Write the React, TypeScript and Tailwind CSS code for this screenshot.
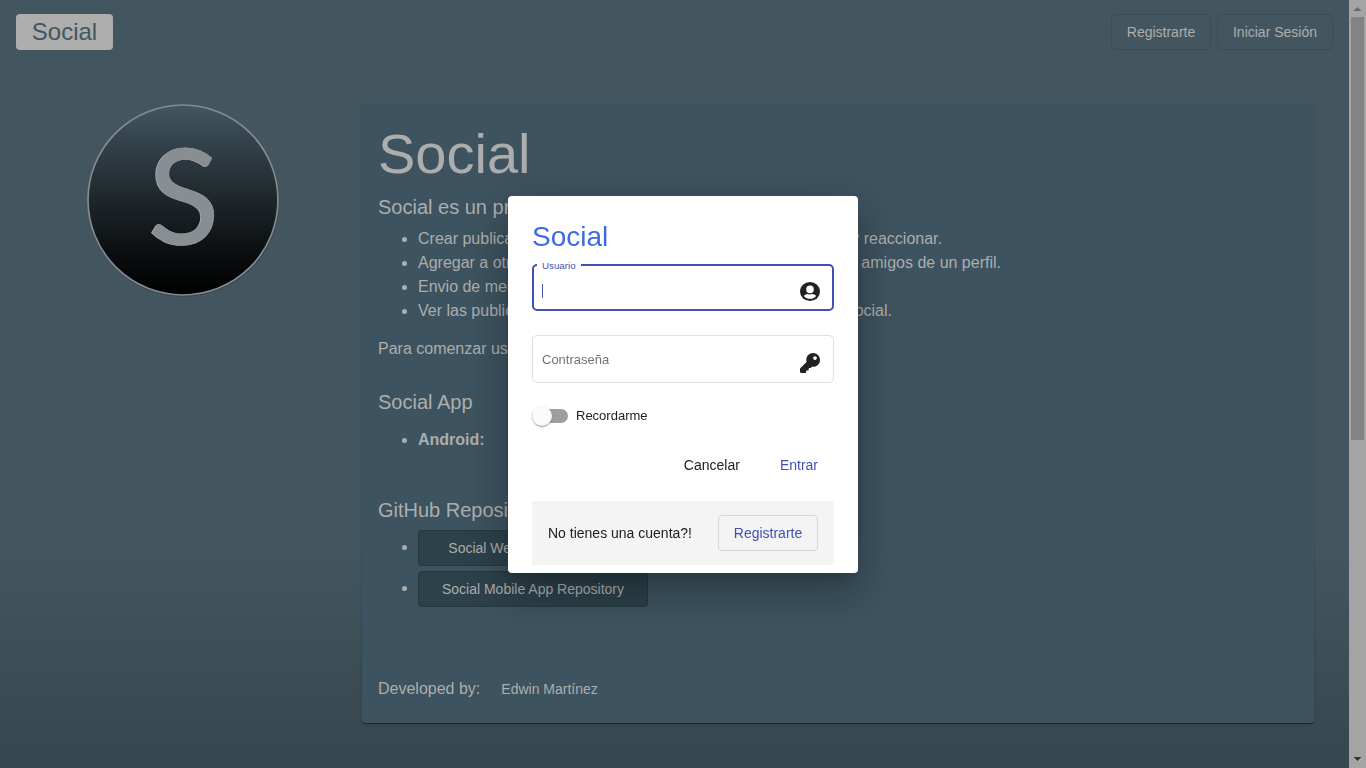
import React from "react";
import { FaKey } from "react-icons/fa";

const features: [string, string, string][] = [
  ["Crear publicaciones", "y reaccionar.", "w-[524px]"],
  ["Agregar a otros usuarios", "amigos de un perfil.", "w-[583px]"],
  ["Envio de mensajes", "", "w-[440px]"],
  ["Ver las publicaciones", "Social.", "w-[474px]"],
];

function Logo() {
  return (
    <svg className="block size-[194px]" viewBox="0 0 194 194">
      <defs>
        <linearGradient id="disc" x1="0" y1="0" x2="0" y2="1">
          <stop offset="0" stopColor="#43565f" />
          <stop offset="0.2" stopColor="#33424a" />
          <stop offset="0.5" stopColor="#1e262a" />
          <stop offset="0.78" stopColor="#0b0e10" />
          <stop offset="1" stopColor="#000" />
        </linearGradient>
      </defs>
      <circle cx="97.4" cy="97.8" r="95" fill="none" stroke="#27343a" strokeOpacity=".5" strokeWidth="2" />
      <circle cx="97" cy="97" r="95" fill="url(#disc)" stroke="#858b8e" strokeWidth="1.7" />
      <g fontFamily="Lato, sans-serif" fontSize="131" textAnchor="middle" strokeLinejoin="miter">
        <text x="97.2" y="140.6" fill="#a2a6a8" stroke="#a2a6a8" strokeWidth="1.6">S</text>
        <text x="98.1" y="141.3" fill="#888e91" stroke="#888e91" strokeWidth="1">S</text>
      </g>
    </svg>
  );
}

function UserIcon() {
  return (
    <svg className="mt-2 h-[19px] w-5" viewBox="2 2.5 20 19" fill="currentColor">
      <ellipse cx="12" cy="12" rx="10" ry="9.5" />
      <g fill="#fff">
        <circle cx="12" cy="9.9" r="3.8" />
        <path d="M5.8 16.4C7.2 15.2 8.6 14.5 9.6 14.5c.8.3 1.6.4 2.4.4s1.6-.1 2.4-.4c1 0 2.4.7 3.8 1.9-1.6 1.9-3.8 2.9-6.2 2.9s-4.6-1-6.2-2.9z" />
      </g>
    </svg>
  );
}

function Page() {
  return (
    <div className="flex min-w-0 flex-1 flex-col bg-[linear-gradient(#43565f_0,#43565f_540px,#36464e_768px)] text-[#adadad]">
      <header className="flex h-16 shrink-0 items-center justify-between pl-4 pr-4">
        <div className="flex h-9 w-[97px] items-center justify-center rounded bg-[#adadad] text-2xl text-[#43565f]">Social</div>
        <nav className="flex gap-1.5 text-sm font-medium">
          <button className="h-9 w-[100px] rounded border border-[#3b4c54]">Registrarte</button>
          <button className="h-9 w-[116px] rounded border border-[#3b4c54]">Iniciar Sesión</button>
        </nav>
      </header>
      <main className="flex pt-[39px]">
        <div className="w-[362px] shrink-0 pl-[86px]">
          <Logo />
        </div>
        <section className="mt-px h-[619px] w-[952px] rounded bg-[#3d535f] px-4 pt-[18px] shadow-[0_2px_1px_-1px_rgba(0,0,0,.2),0_1px_1px_0_rgba(0,0,0,.3),0_1px_3px_0_rgba(0,0,0,.12)]">
          <h1 className="h-16 text-[56px] leading-[64px]">Social</h1>
          <h2 className="mt-[5px] text-xl leading-8">Social es un proyecto</h2>
          <ul className="mt-1 list-disc pl-10 text-base leading-6">
            {features.map(([start, end, width]) => (
              <li key={start}>
                <div className={`flex justify-between whitespace-nowrap ${width}`}>
                  <span>{start}</span>
                  <span>{end}</span>
                </div>
              </li>
            ))}
          </ul>
          <p className="mt-3.5 text-base leading-6">Para comenzar usa</p>
          <h2 className="mt-[25px] text-xl leading-8">Social App</h2>
          <ul className="mt-2.5 list-disc pl-10 text-base font-bold leading-6">
            <li>Android:</li>
          </ul>
          <h2 className="mt-[42px] text-xl leading-8">GitHub Repository</h2>
          <ul className="mt-1 flex list-disc flex-col gap-[5px] pl-10 text-base">
            <li>
              <button className="h-9 w-[230px] rounded border border-[#26383f] bg-[#2c4149] align-middle text-sm font-medium">Social Web App Repository</button>
            </li>
            <li>
              <button className="h-9 w-[230px] rounded border border-[#26383f] bg-[#2c4149] align-middle text-sm font-medium">Social Mobile App Repository</button>
            </li>
          </ul>
          <footer className="mt-[70px] flex items-center gap-[21px] text-base leading-6">
            <span>Developed by:</span>
            <a className="text-sm font-medium">Edwin Martínez</a>
          </footer>
        </section>
      </main>
    </div>
  );
}

function Scrollbar() {
  return (
    <div className="flex w-[17px] shrink-0 flex-col items-center bg-[#a4a4a4]">
      <svg className="h-[17px] w-[17px]" viewBox="0 0 17 17" shapeRendering="crispEdges">
        <path d="M5 11h7v-1h-1V9h-1V8H9V7H8v1H7v1H6v1H5z" fill="#6b6b6b" />
      </svg>
      <div className="h-[423px] w-[13px] bg-[#838383]" />
      <svg className="mt-auto h-[17px] w-[17px]" viewBox="0 0 17 17" shapeRendering="crispEdges">
        <path d="M5 6h7v1h-1v1h-1v1H9v1H8V9H7V8H6V7H5z" fill="#373737" />
      </svg>
    </div>
  );
}

function LoginDialog() {
  return (
    <div className="h-[377px] w-[350px] rounded bg-white px-6 pt-[25px] text-[#212121] shadow-[0_11px_15px_-7px_rgba(0,0,0,.2),0_24px_38px_3px_rgba(0,0,0,.14),0_9px_46px_8px_rgba(0,0,0,.12)]">
      <h2 className="h-8 text-[28px] leading-8 text-[#4169e1]">Social</h2>
      <div className="relative mt-[11px] flex h-[47px] items-center justify-between rounded-[5px] border-2 border-[#3f51b5] pl-2 pr-3">
        <span className="absolute -top-1.5 left-[3px] bg-white px-[5px] text-[9.75px] leading-[11px] text-[#3f51b5]">Usuario</span>
        <span className="mt-[7px] h-3.5 w-px bg-[#3f51b5]" />
        <UserIcon />
      </div>
      <div className="mt-6 flex h-12 items-center justify-between rounded-[5px] border border-[#e0e0e0] pl-[9px] pr-[13px]">
        <span className="pt-0.5 text-[13px] text-[#757575]">Contraseña</span>
        <FaKey className="mt-[9px] size-5" />
      </div>
      <div className="mt-[21px] flex h-6 items-center text-[13px]">
        <div className="flex h-3.5 w-9 items-center rounded-full bg-[#9e9e9e]">
          <div className="size-5 rounded-full bg-[#fafafa] shadow-[0_2px_1px_-1px_rgba(0,0,0,.2),0_1px_1px_0_rgba(0,0,0,.14),0_1px_3px_0_rgba(0,0,0,.12)]" />
        </div>
        <span className="ml-2">Recordarme</span>
      </div>
      <div className="mt-[19px] flex h-9 items-center justify-end gap-10 pr-4 text-sm font-medium">
        <button>Cancelar</button>
        <button className="text-[#3f51b5]">Entrar</button>
      </div>
      <div className="mt-[18px] flex h-16 items-center justify-between bg-[#f4f4f4] px-4 text-sm">
        <span>No tienes una cuenta?!</span>
        <button className="h-9 w-[100px] rounded border border-[#d5d5d5] font-medium text-[#3f51b5]">Registrarte</button>
      </div>
    </div>
  );
}

export default function App() {
  return (
    <div className="flex h-screen w-full overflow-hidden font-['Liberation_Sans',Arial,sans-serif]">
      <Page />
      <Scrollbar />
      <div className="fixed inset-0 flex items-center justify-center">
        <LoginDialog />
      </div>
    </div>
  );
}
